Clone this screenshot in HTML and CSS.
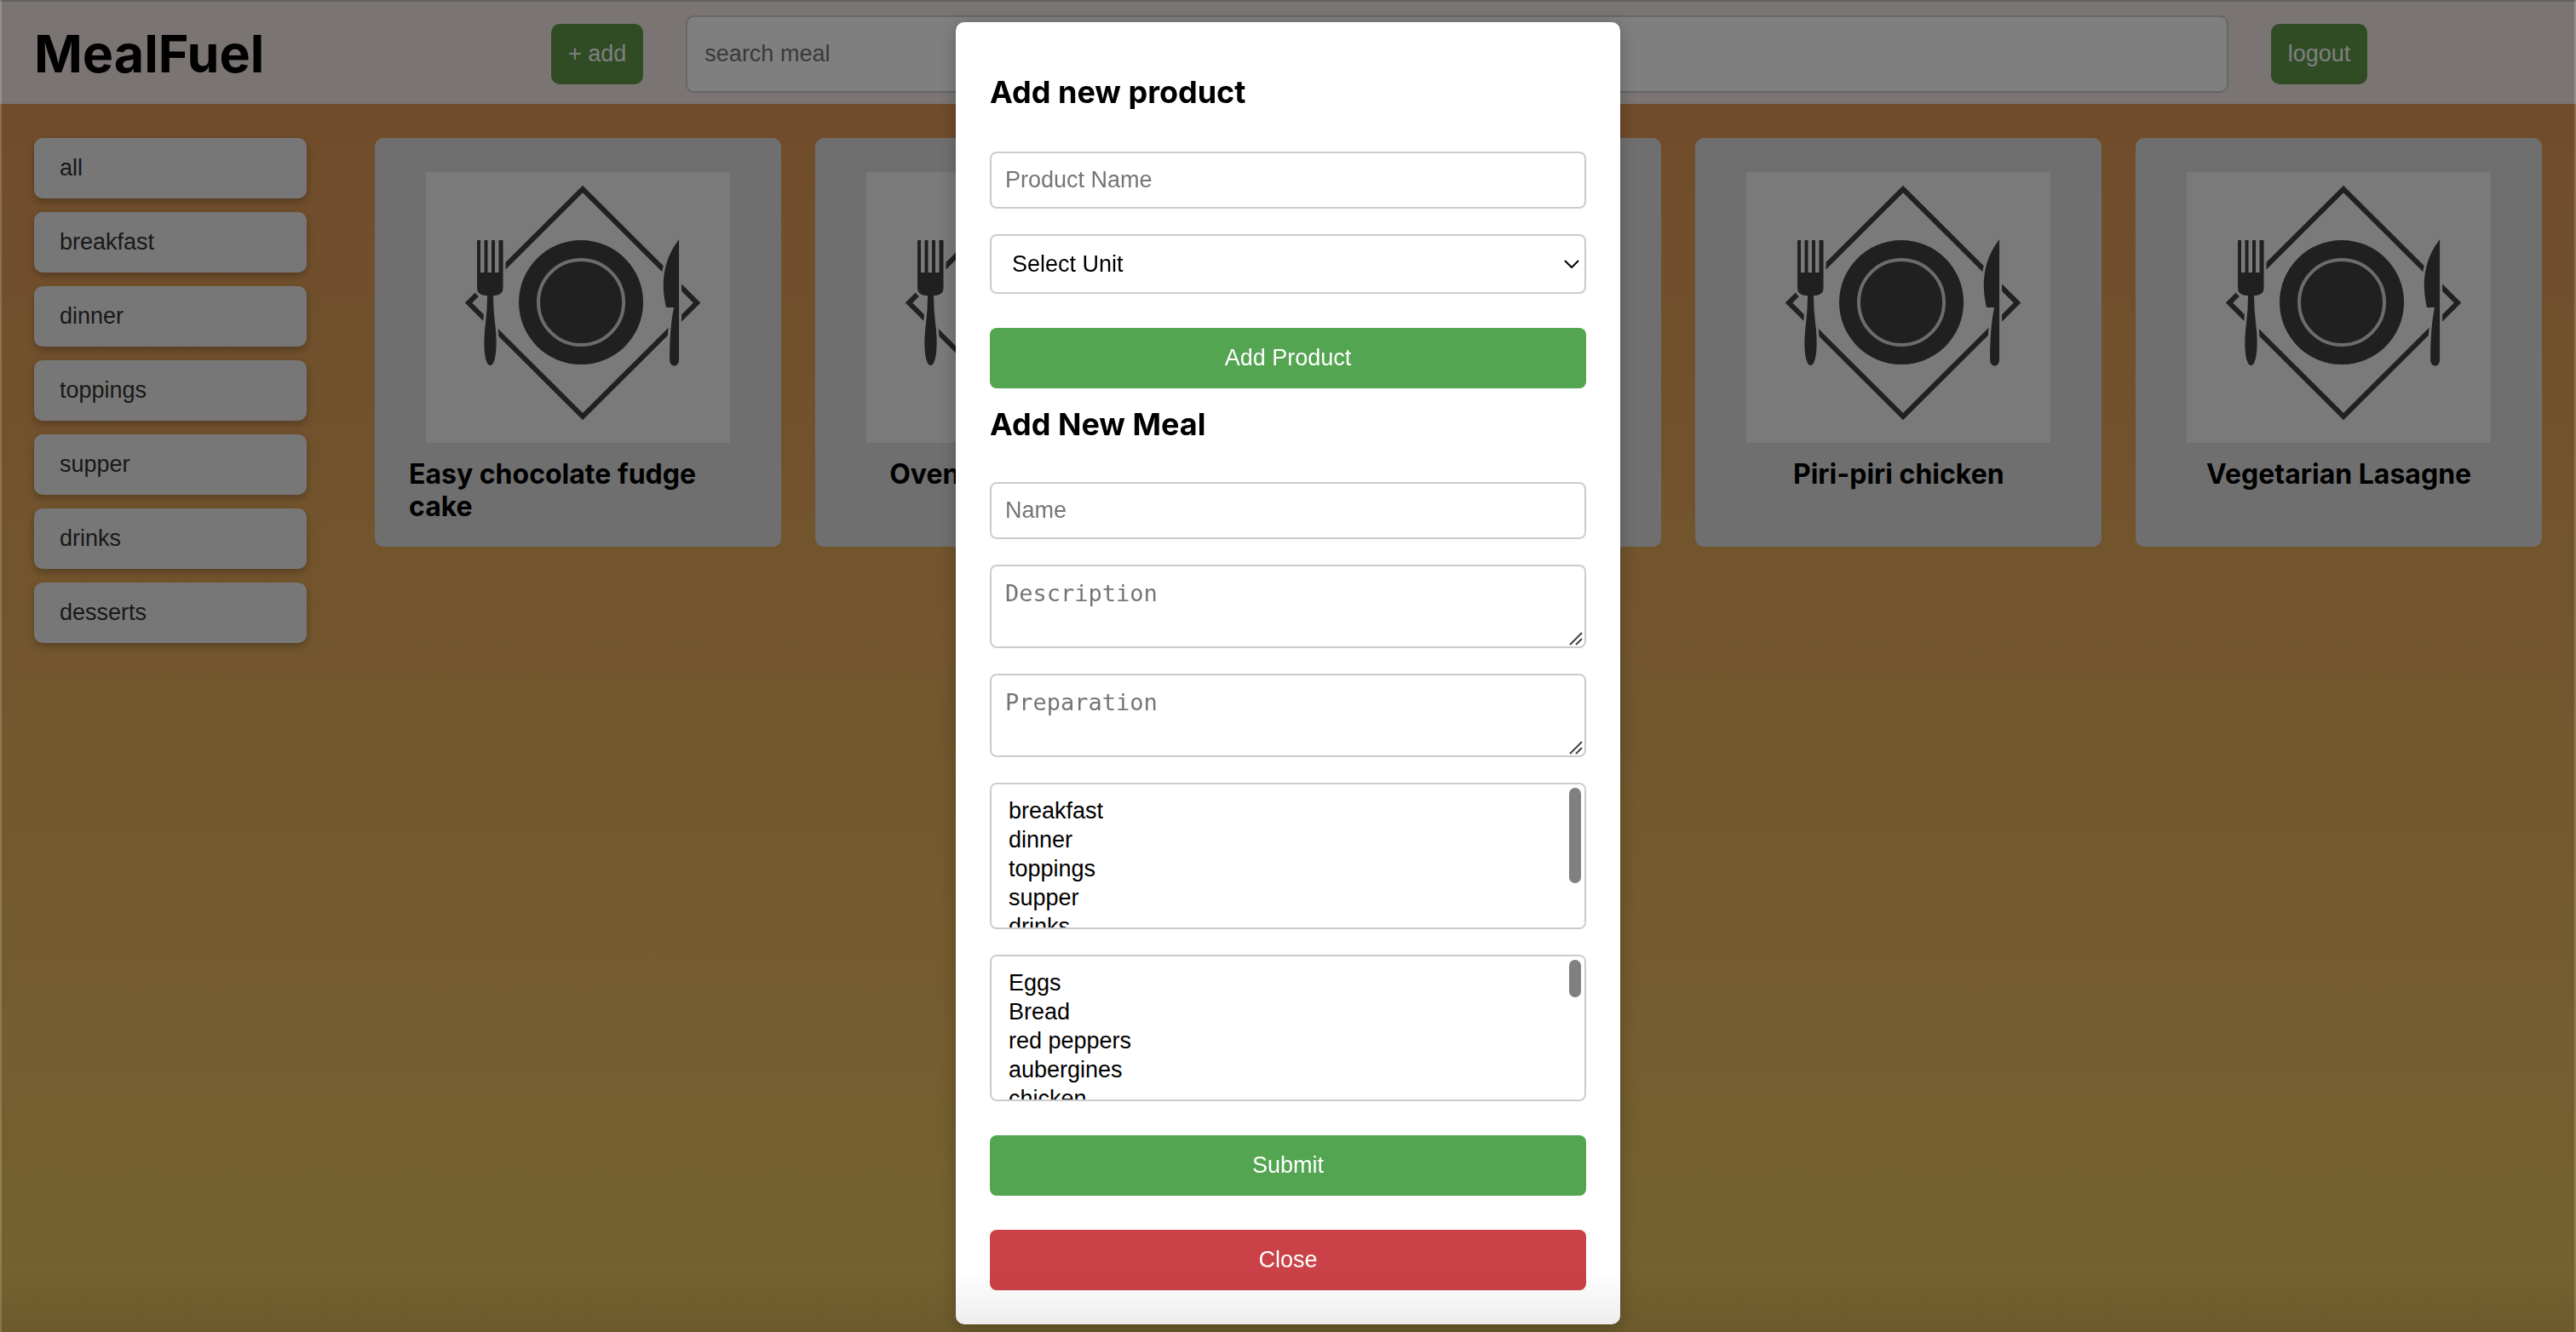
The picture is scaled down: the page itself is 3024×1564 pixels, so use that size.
FILE: index.html
```html
<!DOCTYPE html>
<html lang="en">
<head>
<meta charset="utf-8">
<meta name="viewport" content="width=device-width, initial-scale=1">
<title>MealFuel</title>
<link rel="stylesheet" href="styles.css">
</head>
<body>
<svg class="defs" aria-hidden="true">
  <symbol id="plate" viewBox="0 0 357 318">
    <path d="M184 20 318 153.500 184 287 50 153.500Z" fill="none" stroke="#404040" stroke-width="6"/>
    <g fill="#404040" stroke="#f5f5f5" stroke-width="6" paint-order="stroke">
      <path d="M60 80h4v38h4.500V80h4v38h4.500V80h4v38h4.500V80h5v56q0 8-9 9h-2.500q0 16 2 32c4 32 0 50-5.500 50s-9.500-18-5.500-50q2-16 2-32H69q-9-1-9-9Z"/>
      <path d="M297 79v141c0 10-11 10-11 0q0-38 5-61h-9c-6-26-5-54 15-80Z"/>
    </g>
    <circle cx="182" cy="153" r="73" fill="#404040"/>
    <circle cx="182" cy="153" r="50" fill="none" stroke="#d8d8d8" stroke-width="4"/>
  </symbol>
  <symbol id="grip" viewBox="0 0 16 16">
    <path d="M1 15 15 1M8 15l7-7" fill="none" stroke="#444" stroke-width="2"/>
  </symbol>
</svg>

<div class="page">
  <header class="header">
    <h1 class="logo">MealFuel</h1>
    <button class="btn" type="button">+ add</button>
    <input class="search" type="search" placeholder="search meal" aria-label="search meal">
    <button class="btn" type="button">logout</button>
  </header>
  <div class="layout">
    <nav class="categories" aria-label="Categories">
      <button class="category" type="button">all</button>
      <button class="category" type="button">breakfast</button>
      <button class="category" type="button">dinner</button>
      <button class="category" type="button">toppings</button>
      <button class="category" type="button">supper</button>
      <button class="category" type="button">drinks</button>
      <button class="category" type="button">desserts</button>
    </nav>
    <main class="meals">
      <article class="card"><svg class="photo" role="img" aria-label="Plate with fork and knife"><use href="#plate"/></svg><h3 class="title">Easy chocolate fudge cake</h3></article>
      <article class="card"><svg class="photo" role="img" aria-label="Plate with fork and knife"><use href="#plate"/></svg><h3 class="title">Oven-baked risotto</h3></article>
      <article class="card"><svg class="photo" role="img" aria-label="Plate with fork and knife"><use href="#plate"/></svg><h3 class="title">Ratatouille</h3></article>
      <article class="card"><svg class="photo" role="img" aria-label="Plate with fork and knife"><use href="#plate"/></svg><h3 class="title">Piri-piri chicken</h3></article>
      <article class="card"><svg class="photo" role="img" aria-label="Plate with fork and knife"><use href="#plate"/></svg><h3 class="title">Vegetarian Lasagne</h3></article>
    </main>
  </div>
</div>

<div class="backdrop">
  <div class="modal" role="dialog" aria-modal="true" aria-label="Add product or meal">
    <form class="form">
      <h2 class="heading">Add new product</h2>
      <input class="field" type="text" placeholder="Product Name" aria-label="Product Name">
      <div class="wrap">
        <select class="field unit" aria-label="Select Unit">
          <option>Select Unit</option>
          <option>g</option>
          <option>ml</option>
          <option>piece</option>
        </select>
        <svg class="chevron" viewBox="0 0 18 10" aria-hidden="true"><path d="M1 1l8 8 8-8" fill="none" stroke="#000" stroke-width="2"/></svg>
      </div>
      <button class="action" type="button">Add Product</button>
    </form>
    <form class="form">
      <h2 class="heading heading-next">Add New Meal</h2>
      <input class="field" type="text" placeholder="Name" aria-label="Name">
      <div class="wrap">
        <textarea class="field area" placeholder="Description" aria-label="Description"></textarea>
        <svg class="grip" aria-hidden="true"><use href="#grip"/></svg>
      </div>
      <div class="wrap">
        <textarea class="field area" placeholder="Preparation" aria-label="Preparation"></textarea>
        <svg class="grip" aria-hidden="true"><use href="#grip"/></svg>
      </div>
      <div class="wrap">
        <select class="field list" multiple aria-label="Categories">
          <option>breakfast</option>
          <option>dinner</option>
          <option>toppings</option>
          <option>supper</option>
          <option>drinks</option>
          <option>desserts</option>
        </select>
        <span class="thumb thumb-long"></span>
      </div>
      <div class="wrap">
        <select class="field list" multiple aria-label="Products">
          <option>Eggs</option>
          <option>Bread</option>
          <option>red peppers</option>
          <option>aubergines</option>
          <option>chicken</option>
          <option>rice</option>
          <option>tomatoes</option>
          <option>onion</option>
          <option>garlic</option>
          <option>flour</option>
          <option>sugar</option>
          <option>butter</option>
          <option>milk</option>
          <option>cocoa</option>
          <option>pasta</option>
          <option>cheese</option>
          <option>olive oil</option>
        </select>
        <span class="thumb"></span>
      </div>
      <button class="action" type="button">Submit</button>
      <button class="action action-close" type="button">Close</button>
    </form>
  </div>
</div>
</body>
</html>
```
FILE: styles.css
```css
* {
  box-sizing: border-box;
}

body {
  margin: 0;
  font-family: Inter, "Liberation Sans", sans-serif;
}

button,
input,
select,
textarea {
  margin: 0;
  font: 27px "Liberation Sans", Arial, sans-serif;
}

.defs {
  display: none;
}

.page {
  min-height: 100vh;
  background: linear-gradient(#e09456, #ecc660);
}

.header {
  display: grid;
  grid-template-columns: 36fr auto 117fr auto 10fr;
  align-items: center;
  gap: 50px;
  height: 122px;
  padding: 2px 40px 0;
  border-top: 2px solid #c6c4c2;
  background: #f4eae7;
}

.logo {
  margin: 0;
  font-size: 61px;
  line-height: 76px;
}

.btn {
  height: 71px;
  padding: 0 20px;
  border: 0;
  border-radius: 10px;
  background: #609848;
  color: #fff;
}

.search {
  width: 100%;
  height: 91px;
  padding: 0 20px;
  border: 2px solid #ccc;
  border-radius: 10px;
  background: #fff;
  appearance: none;
}

.layout {
  display: flex;
  align-items: flex-start;
  gap: 80px;
  padding: 40px;
}

.categories {
  display: flex;
  flex: 0 0 320px;
  flex-direction: column;
  gap: 16px;
}

.category {
  height: 71px;
  padding: 0 30px;
  border: 0;
  border-radius: 10px;
  background: #eee;
  box-shadow: 0 4px 10px #00000040;
  color: #333;
  text-align: left;
}

.meals {
  display: grid;
  flex: 1;
  grid-template-columns: repeat(5, 1fr);
  gap: 40px;
}

.card {
  display: flex;
  flex-direction: column;
  align-items: center;
  min-height: 480px;
  padding: 40px 40px 20px;
  border-radius: 10px;
  background: #dfdfdf;
}

.photo {
  width: 90%;
  aspect-ratio: 357 / 318;
  background: #f5f5f5;
}

.title {
  margin: 18px 0 0;
  font-size: 32px;
  line-height: 38px;
}

.backdrop {
  position: fixed;
  inset: 0;
  display: flex;
  align-items: flex-start;
  justify-content: center;
  overflow: auto;
  padding: 26px 0 8px;
  border: 0 solid #ffffff30;
  border-width: 0 2px;
  background: #00000080;
}

.backdrop::after {
  content: "";
  position: fixed;
  inset: auto 0 0;
  height: 72px;
  background: linear-gradient(#0000, #00000014);
  pointer-events: none;
}

.modal {
  width: 780px;
  padding: 40px;
  border-radius: 10px;
  background: #fff;
  box-shadow: 0 4px 20px #00000040;
}

.form {
  display: flex;
  flex-direction: column;
  gap: 30px;
}

.heading {
  margin: 20px 0 18px;
  font-size: 36px;
  line-height: 44px;
}

.heading-next {
  margin-bottom: 16px;
}

.field {
  width: 100%;
  height: 67px;
  padding: 16px;
  border: 2px solid #ccc;
  border-radius: 8px;
  background: #fff;
  color: #000;
}

.field::placeholder,
.search::placeholder {
  color: #757575;
}

.wrap {
  position: relative;
  display: flex;
}

.unit {
  height: 70px;
  padding: 0 24px;
  appearance: none;
}

.chevron {
  position: absolute;
  top: 30px;
  right: 8px;
  width: 18px;
  height: 10px;
  pointer-events: none;
}

.area {
  height: 98px;
  font-family: "DejaVu Sans Mono", monospace;
  resize: vertical;
}

.area::-webkit-resizer {
  background: transparent;
}

.grip {
  position: absolute;
  right: 4px;
  bottom: 3px;
  width: 16px;
  height: 16px;
  pointer-events: none;
}

.list {
  height: 172px;
  scrollbar-width: none;
}

.list option {
  min-height: 34px;
  padding: 0 4px;
  line-height: 34px;
}

.thumb {
  position: absolute;
  top: 6px;
  right: 6px;
  width: 14px;
  height: 44px;
  border-radius: 7px;
  background: #808080;
  pointer-events: none;
}

.thumb-long {
  height: 112px;
}

.action {
  height: 71px;
  margin-top: 10px;
  border: 0;
  border-radius: 8px;
  background: #53a551;
  color: #fff;
}

.action-close {
  background: #ca4248;
}
```
